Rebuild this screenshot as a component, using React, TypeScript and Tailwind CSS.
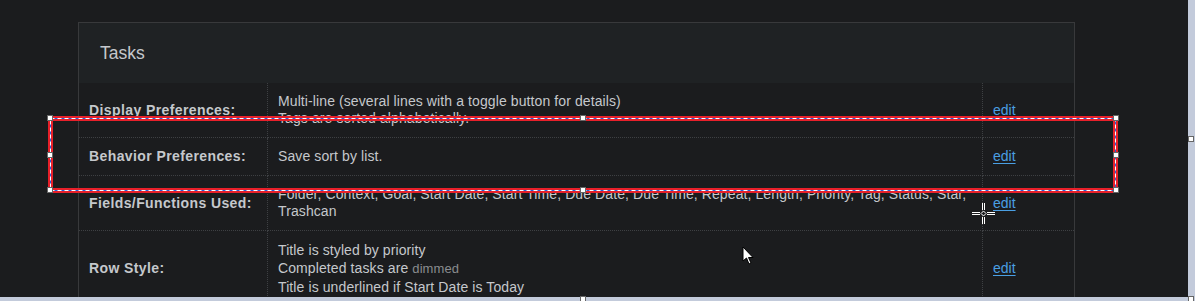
import React from 'react';

const rows = [
  {
    label: 'Display Preferences:',
    lines: ['Multi-line (several lines with a toggle button for details)', 'Tags are sorted alphabetically.'],
  },
  { label: 'Behavior Preferences:', lines: ['Save sort by list.'] },
  {
    label: 'Fields/Functions Used:',
    lines: [
      'Folder, Context, Goal, Start Date, Start Time, Due Date, Due Time, Repeat, Length, Priority, Tag, Status, Star, Trashcan',
    ],
  },
];

// selection handles drawn over the page
const handles = [
  [50, 118], [583, 118], [1116, 118],
  [50, 155], [1116, 155],
  [50, 190], [583, 190], [1116, 190],
  [1191, 139], [583, 299], [1191, 299],
];

export default function App() {
  return (
    <div
      className="relative w-[1195px] h-[301px] overflow-hidden flex bg-[#1b1c1e] text-[#c5c8cc]"
      style={{ fontFamily: '"Liberation Sans", Arial, sans-serif' }}
    >
      <div className="w-[1188px] flex flex-col">
        <div className="h-[297px] overflow-hidden">
          <div className="ml-[78px] mt-[22px] w-[997px] border border-[#38393b]">
            <div className="h-[60px] bg-[#1f2224] pl-[21px] flex items-center text-[17.5px]">Tasks</div>
            <div className="grid grid-cols-[189px_715px_1fr] text-[14px]">
              {rows.map((r) => (
                <React.Fragment key={r.label}>
                  <div className="flex items-center pl-[10px] border-r border-b border-dotted border-[#3e4043] font-bold tracking-[0.4px]">
                    {r.label}
                  </div>
                  <div className="py-[10px] px-[10px] leading-[17px] tracking-[0.1px] border-r border-b border-dotted border-[#3e4043]">
                    {r.lines.map((l) => (
                      <div key={l}>{l}</div>
                    ))}
                  </div>
                  <div className="flex items-center pl-[10px] border-b border-dotted border-[#3e4043]">
                    <span className="text-[#4a9fe3] underline underline-offset-2">edit</span>
                  </div>
                </React.Fragment>
              ))}
              <div className="flex items-center pl-[10px] border-r border-dotted border-[#3e4043] font-bold tracking-[0.4px]">
                Row Style:
              </div>
              <div className="py-[10px] px-[10px] leading-[18px] tracking-[0.1px] border-r border-dotted border-[#3e4043]">
                <div>Title is styled by priority</div>
                <div>
                  Completed tasks are <span className="text-[13px] text-[#8a8c8f]">dimmed</span>
                </div>
                <div>Title is underlined if Start Date is Today</div>
              </div>
              <div className="flex items-center pl-[10px]">
                <span className="text-[#4a9fe3] underline underline-offset-2">edit</span>
              </div>
            </div>
          </div>
        </div>
        <div className="h-[4px] bg-[#c3cbdb]" />
      </div>
      <div className="w-[7px] bg-[#c3cbdb]" />

      {/* selection overlay, cursor and crosshair */}
      <svg className="absolute left-0 top-0 pointer-events-none" width="1195" height="301">
        <rect x="50.5" y="118.5" width="1065" height="72" fill="none" stroke="#e8202a" strokeWidth="5" />
        <rect x="50.5" y="118.5" width="1065" height="72" fill="none" stroke="#2b5fd6" strokeWidth="1" />
        <rect x="50.5" y="118.5" width="1065" height="72" fill="none" stroke="#ffffff" strokeWidth="1" strokeDasharray="4 3" />
        {handles.map(([x, y]) => (
          <rect key={`${x}-${y}`} x={x - 2.5} y={y - 2.5} width="5" height="5" fill="#fff" stroke="#666" strokeWidth="1" />
        ))}
        <path d="M743 247 L743 261 L746.5 258 L749 264 L751 263 L748.5 257.5 L753 257.5 Z" fill="#ffffff" stroke="#000" strokeWidth="1" />
        <g stroke="#ffffff" strokeWidth="1" fill="none">
          <path d="M982.5 203 V210 M984.5 203 V210 M982.5 217 V224 M984.5 217 V224" />
          <path d="M972 212.5 H980 M972 214.5 H980 M987 212.5 H995 M987 214.5 H995" />
          <path d="M983.5 211 L986 213.5 L983.5 216 L981 213.5 Z" />
        </g>
      </svg>
    </div>
  );
}
